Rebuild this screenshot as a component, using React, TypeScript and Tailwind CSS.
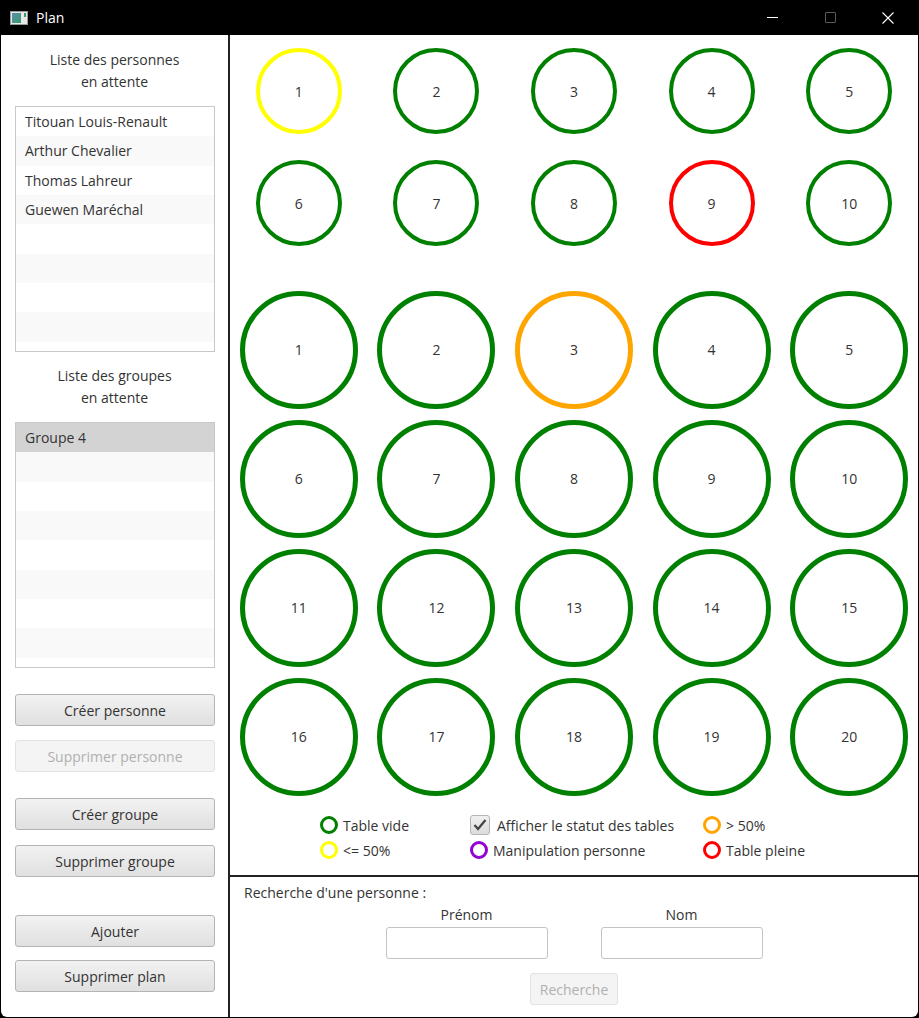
import React from 'react'

const font = { fontFamily: '"Open Sans", "Noto Sans", sans-serif' }

const persons = ['Titouan Louis-Renault', 'Arthur Chevalier', 'Thomas Lahreur', 'Guewen Maréchal']
const groups = ['Groupe 4']

const smallTables = [
  { n: 1, c: 'border-[#ffff00]' },
  { n: 2, c: 'border-[#008000]' },
  { n: 3, c: 'border-[#008000]' },
  { n: 4, c: 'border-[#008000]' },
  { n: 5, c: 'border-[#008000]' },
  { n: 6, c: 'border-[#008000]' },
  { n: 7, c: 'border-[#008000]' },
  { n: 8, c: 'border-[#008000]' },
  { n: 9, c: 'border-[#ff0000]' },
  { n: 10, c: 'border-[#008000]' },
]

const bigTables = Array.from({ length: 20 }, (_, i) => ({
  n: i + 1,
  c: i === 2 ? 'border-[#ffa500]' : 'border-[#008000]',
}))

const ListBox = ({ items, selected }: { items: string[]; selected?: number }) => (
  <div className="ml-[14px] mr-[13px] h-[246px] border border-[#c8c8c8] bg-white overflow-hidden">
    {Array.from({ length: 9 }, (_, i) => (
      <div
        key={i}
        className={
          'h-[29.33px] flex items-center pl-[9px] text-[14px] text-[#333] ' +
          (selected === i ? 'bg-[#d3d3d3]' : i % 2 === 1 ? 'bg-[#f9f9f9]' : 'bg-white')
        }
      >
        {items[i] ?? ''}
      </div>
    ))}
  </div>
)

const Btn = ({ label, disabled, className }: { label: string; disabled?: boolean; className?: string }) => (
  <div
    className={
      'ml-[14px] mr-[13px] h-[32px] flex items-center justify-center rounded-[3px] border text-[14px] ' +
      (disabled
        ? 'border-[#e2e2e2] bg-[#f4f4f4] text-[#b0b0b0] '
        : 'border-[#b4b4b4] bg-gradient-to-b from-[#f2f2f2] to-[#e0e0e0] text-[#333] ') +
      (className ?? '')
    }
  >
    {label}
  </div>
)

const Dot = ({ c }: { c: string }) => (
  <span className={'inline-block w-[18px] h-[18px] rounded-full border-[3px] ' + c} />
)

const App = () => {
  return (
    <div className="w-[919px] h-[1018px] bg-black flex flex-col" style={font}>
      {/* title bar */}
      <div className="h-[35px] flex items-center text-white">
        <svg width="18" height="14" viewBox="0 0 18 14" className="ml-[10px]">
          <defs>
            <linearGradient id="g" x1="0" y1="0" x2="1" y2="1">
              <stop offset="0" stopColor="#5a8fb0" />
              <stop offset="1" stopColor="#3a9a6a" />
            </linearGradient>
          </defs>
          <rect x="0.5" y="0.5" width="17" height="13" fill="#e8e8e8" stroke="#9a9a9a" />
          <rect x="2" y="2" width="9" height="10" fill="url(#g)" />
          <rect x="14" y="2" width="2" height="4" fill="#3a9a6a" />
        </svg>
        <span className="ml-[8px] text-[14px]">Plan</span>
        <div className="ml-auto mr-[2px] flex items-center">
          <div className="w-[58px] h-[35px] flex items-center justify-center">
            <div className="w-[11px] h-px bg-white" />
          </div>
          <div className="w-[58px] h-[35px] flex items-center justify-center">
            <div className="w-[11px] h-[11px] border border-[#5a5a5a] rounded-[1px]" />
          </div>
          <div className="w-[58px] h-[35px] flex items-center justify-center">
            <svg width="12" height="12" viewBox="0 0 12 12">
              <path d="M0.5 0.5 L11.5 11.5 M11.5 0.5 L0.5 11.5" stroke="white" strokeWidth="1.1" />
            </svg>
          </div>
        </div>
      </div>

      {/* body */}
      <div className="flex-1 flex bg-white mx-px mb-px rounded-b-[6px] overflow-hidden">
        {/* left panel */}
        <div className="w-[229px] flex flex-col border-r-2 border-[#222]">
          <div className="pt-[14px] text-center text-[14px] leading-[22px] text-[#333]">
            Liste des personnes
            <br />
            en attente
          </div>
          <div className="mt-[13px]">
            <ListBox items={persons} />
          </div>
          <div className="mt-[13px] text-center text-[14px] leading-[22px] text-[#333]">
            Liste des groupes
            <br />
            en attente
          </div>
          <div className="mt-[13px]">
            <ListBox items={groups} selected={0} />
          </div>
          <Btn label="Créer personne" className="mt-[26px]" />
          <Btn label="Supprimer personne" disabled className="mt-[14px]" />
          <Btn label="Créer groupe" className="mt-[26px]" />
          <Btn label="Supprimer groupe" className="mt-[15px]" />
          <Btn label="Ajouter" className="mt-[38px]" />
          <Btn label="Supprimer plan" className="mt-[13px]" />
        </div>

        {/* right panel */}
        <div className="flex-1 flex flex-col">
          <div className="grid grid-cols-5">
            {smallTables.map((t) => (
              <div key={t.n} className="h-[112px] flex items-center justify-center">
                <div
                  className={
                    'w-[86px] h-[86px] rounded-full border-[4px] flex items-center justify-center text-[14px] text-[#333] ' +
                    t.c
                  }
                >
                  {t.n}
                </div>
              </div>
            ))}
          </div>
          <div className="grid grid-cols-5 mt-[26px]">
            {bigTables.map((t) => (
              <div key={t.n} className="h-[129px] flex items-center justify-center">
                <div
                  className={
                    'w-[118px] h-[118px] rounded-full border-[5px] flex items-center justify-center text-[14px] text-[#333] ' +
                    t.c
                  }
                >
                  {t.n}
                </div>
              </div>
            ))}
          </div>

          {/* legend */}
          <div className="flex pl-[90px] pt-[15px] h-[74px] text-[14px] text-[#333]">
            <div className="w-[150px] flex flex-col gap-[7px]">
              <div className="h-[18px] flex items-center gap-[5px]">
                <Dot c="border-[#008000]" />
                Table vide
              </div>
              <div className="h-[18px] flex items-center gap-[5px]">
                <Dot c="border-[#ffff00]" />
                {'<= 50%'}
              </div>
            </div>
            <div className="w-[233px] flex flex-col gap-[7px]">
              <div className="h-[18px] flex items-center gap-[7px]">
                <span className="w-[20px] h-[20px] rounded-[3px] border border-[#b4b4b4] bg-gradient-to-b from-[#f0f0f0] to-[#dcdcdc] flex items-center justify-center">
                  <svg width="14" height="12" viewBox="0 0 14 12">
                    <path d="M1.5 6 L5 10 L12.5 1" stroke="#444" strokeWidth="2.2" fill="none" />
                  </svg>
                </span>
                Afficher le statut des tables
              </div>
              <div className="h-[18px] flex items-center gap-[5px]">
                <Dot c="border-[#9400d3]" />
                Manipulation personne
              </div>
            </div>
            <div className="flex flex-col gap-[7px]">
              <div className="h-[18px] flex items-center gap-[5px]">
                <Dot c="border-[#ffa500]" />
                {'> 50%'}
              </div>
              <div className="h-[18px] flex items-center gap-[5px]">
                <Dot c="border-[#ff0000]" />
                Table pleine
              </div>
            </div>
          </div>

          {/* search */}
          <div className="flex-1 border-t-2 border-[#222] flex flex-col">
            <div className="pl-[14px] pt-[6px] text-[14px] leading-[20px] text-[#333]">
              Recherche d'une personne :
            </div>
            <div className="flex justify-center gap-[53px] mt-[2px]">
              <div className="flex flex-col items-center">
                <span className="text-[14px] leading-[20px] text-[#333]">Prénom</span>
                <div className="mt-[2px] w-[162px] h-[32px] rounded-[3px] border border-[#c4c4c4] bg-white" />
              </div>
              <div className="flex flex-col items-center">
                <span className="text-[14px] leading-[20px] text-[#333]">Nom</span>
                <div className="mt-[2px] w-[162px] h-[32px] rounded-[3px] border border-[#c4c4c4] bg-white" />
              </div>
            </div>
            <div className="flex justify-center mt-[14px]">
              <div className="w-[88px] h-[32px] rounded-[3px] border border-[#e2e2e2] bg-[#f4f4f4] text-[#b0b0b0] text-[14px] flex items-center justify-center">
                Recherche
              </div>
            </div>
          </div>
        </div>
      </div>
    </div>
  )
}

export default App
